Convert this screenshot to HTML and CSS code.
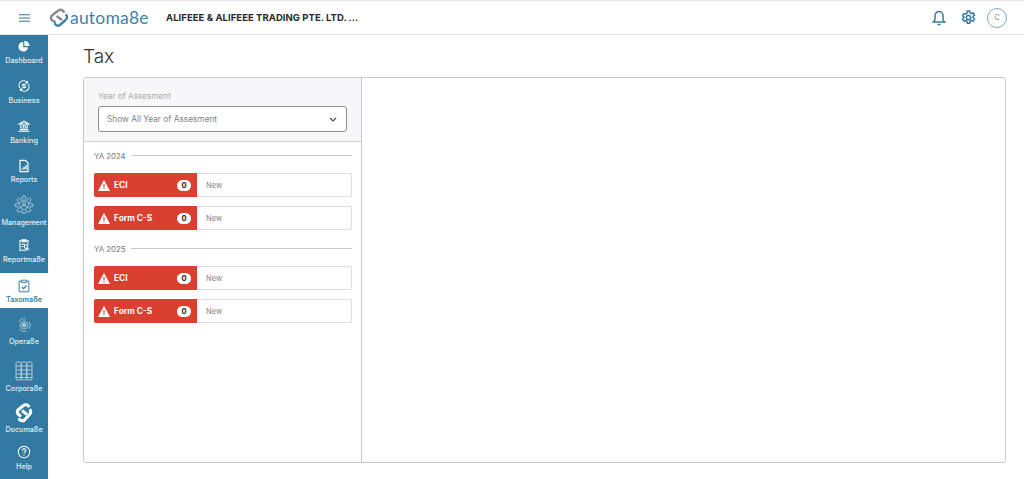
FILE: index.html
```html
<!DOCTYPE html>
<html lang="en">
<head>
<meta charset="utf-8">
<title>Tax</title>
<link rel="stylesheet" href="styles.css">
</head>
<body>
<header class="topbar">
  <svg class="menu" viewBox="0 0 11 8" width="11" height="8"><path d="M0 .7h11M0 4h11M0 7.300h11" stroke="#337aa2" stroke-width="1.100" fill="none"/></svg>
  <svg class="logo-mark" viewBox="0 0 20 20" width="20" height="20" fill="none" stroke-width="2.400">
    <path d="M9.500 2.500 3.500 7a3.200 3.200 0 0 0 0 5.500l3 2" stroke="#85898e"/>
    <path d="M9.500 2.500a3.400 3.400 0 0 1 4.500.300l1.500 1.700" stroke="#85898e"/>
    <path d="M7.500 8l5.500 4" stroke="#85898e"/>
    <path d="M16.500 6.500a3.200 3.200 0 0 1 0 5.500l-5.500 5a3.400 3.400 0 0 1-4.500-.5L5.500 15" stroke="#3d82ab"/>
  </svg>
  <span class="logo-text">automa8e</span>
  <span class="company">ALIFEEE &amp; ALIFEEE TRADING PTE. LTD. ...</span>
  <div class="top-actions">
    <svg class="bell" viewBox="0 0 14 16" width="14" height="16" fill="none" stroke="#337aa2" stroke-width="1.500"><path d="M7 1.500a4 4 0 0 1 4 4V9c0 1.500.8 2.400 1.600 3H1.400C2.200 11.400 3 10.500 3 9V5.500a4 4 0 0 1 4-4Z"/><path d="M5.500 14.500h3"/></svg>
    <svg class="gear" viewBox="0 0 16 16" width="15" height="15" fill="none" stroke="#337aa2" stroke-width="1.600"><path d="M6.700 1h2.600l.4 2 1.500.8 1.900-.7 1.300 2.300-1.500 1.300v1.600l1.500 1.300-1.300 2.300-1.900-.7-1.500.8-.4 2H6.700l-.4-2-1.500-.8-1.900.7-1.300-2.300 1.500-1.300V7.400L1.600 6.100l1.300-2.300 1.900.7 1.500-.8Z"/><circle cx="8" cy="8.200" r="2.300"/></svg>
    <span class="avatar">C</span>
  </div>
</header>
<div class="shell">
  <nav class="sidebar">
    <a class="nav h40"><svg class="ic" viewBox="-2 -2 20 20" width="16" height="16" fill="#fff"><path d="M7 3a6 6 0 1 0 6 6.500H7Z"/><path d="M8.500 1.500v6.500H15a6.500 6.500 0 0 0-6.500-6.500Z"/></svg><span>Dashboard</span></a>
    <a class="nav h40"><svg class="ic" viewBox="-2 -2 20 20" width="16" height="16" fill="none" stroke="#fff" stroke-width="1.400"><path d="M2.800 10.500A5.500 5.500 0 0 1 12 3.800M13.200 5.500A5.500 5.500 0 0 1 4 12.200"/><path d="M12.400 1.800v2.300h-2.300M3.600 14.200v-2.300h2.300"/><path d="M10 6H7a1 1 0 0 0 0 2h2a1 1 0 0 1 0 2H6"/></svg><span>Business</span></a>
    <a class="nav h40"><svg class="ic" viewBox="-2 -2 20 20" width="16" height="16" fill="none" stroke="#fff" stroke-width="1.400"><path d="M2 5.500 8 2l6 3.500ZM1 14.500h14M3 12.500h10M4 6.500v5M7 6.500v5M9.500 6.500v5M12 6.500v5"/></svg><span>Banking</span></a>
    <a class="nav h34"><svg class="ic" viewBox="-2 -2 20 20" width="16" height="16" fill="none" stroke="#fff" stroke-width="1.500"><path d="M3 1h7l3 3.500V15H3Z"/><path d="M6 12.500V11M8 12.500V9M10.500 12.500V7" stroke-width="1.700"/></svg><span>Reports</span></a>
    <a class="nav h45"><svg class="ic dim" viewBox="-3 -3 30 30" width="24" height="24" fill="none" stroke="#fff" stroke-width="1.200"><path d="M10.500 2h3l.5 3 2.200 1 2.600-1.700 2.100 2.100L19 9l1 2.500 3 .5v3l-3 .5-1 2.200 1.700 2.600-2.100 2.100-2.600-1.700-2 .8-.5 2h-3l-.5-2-2.200-.8-2.600 1.700-2.100-2.100L5 18l-1-2.500-3-.5v-3l3-.5L5 9 3.300 6.400l2.100-2.100L8 6l2-1Z"/><circle cx="12" cy="13" r="6"/><circle cx="12" cy="11" r="2"/><path d="M8.500 17a3.500 3.500 0 0 1 7 0"/></svg><span>Management</span></a>
    <a class="nav h36"><svg class="ic" viewBox="-2 -2 20 20" width="16" height="16" fill="none" stroke="#fff" stroke-width="1.300"><path d="M5 2.500H3v12h8v-2"/><path d="M11 2.500h2v5"/><path d="M5.500 1.500h5v2.500h-5Z" fill="#fff"/><path d="M5 7h4M5 10h2"/><circle cx="10.500" cy="10" r="2.200"/><path d="m12 12 2.500 2.500"/></svg><span>Reportma8e</span></a>
    <a class="nav active"><svg class="ic" viewBox="-1 -1 18 18" width="16" height="16" fill="none" stroke="#337aa2" stroke-width="1.100"><path d="M5 2.500H2.500v12h11v-12H11"/><path d="M5 1.500h6v2.500H5Z"/><path d="m5.500 9 2 2 3.500-3.500" stroke-width="1.400"/></svg><span>Taxoma8e</span></a>
    <a class="nav operate"><svg class="ic dim" viewBox="-3 -3 26 26" width="20" height="20" fill="none" stroke="#fff" stroke-width="1.200"><path d="M3 6A8.500 8.500 0 0 1 12 1.800M17 6a8.500 8.500 0 0 1-.5 9M13 18a8.500 8.500 0 0 1-9-2.500"/><circle cx="10" cy="10" r="5"/><circle cx="10" cy="10" r="2.500" fill="#fff"/></svg><span>Opera8e</span></a>
    <a class="nav h43"><svg class="ic dim" viewBox="0 0 22 22" width="22" height="22" fill="none" stroke="#fff" stroke-width="1"><rect x="3" y="2" width="5" height="18" rx="1"/><rect x="8.500" y="2" width="5" height="18" rx="1"/><rect x="14" y="2" width="5" height="18" rx="1"/><path d="M3 6h16M3 10h16M3 14h16M3 17.500h16"/></svg><span>Corpora8e</span></a>
    <a class="nav h41"><svg class="ic" viewBox="0 0 20 20" width="20" height="20" fill="none" stroke="#fff" stroke-width="3"><path d="M9.500 2.500 4.500 6.500a3.200 3.200 0 0 0 0 5l2.500 2"/><path d="M9.500 2.500a3.500 3.500 0 0 1 5 .5l1 1"/><path d="M15.500 6.500a3.200 3.200 0 0 1 0 5l-5 5.500a3.500 3.500 0 0 1-5-.5l-1-1"/><path d="m8 7.500 5 4"/></svg><span>Documa8e</span></a>
    <a class="nav"><svg class="ic" viewBox="-1.500 -1.500 19 19" width="16" height="16" fill="none" stroke="#fff" stroke-width="1.200"><circle cx="8" cy="8" r="6.800"/><path d="M6 6.300a2 2 0 1 1 3 1.700c-.7.400-1 .8-1 1.600" stroke-width="1.300"/><path d="M8 11v1.200" stroke-width="1.300"/></svg><span>Help</span></a>
  </nav>
  <main class="content">
    <h1 class="title">Tax</h1>
    <section class="card">
      <aside class="left">
        <div class="filter">
          <label class="filter-label">Year of Assesment</label>
          <div class="select">
            <span>Show All Year of Assesment</span>
            <svg viewBox="0 0 8 5" width="8" height="5" fill="none" stroke="#3f4a8a" stroke-width="1.200"><path d="m1 1 3 3 3-3"/></svg>
          </div>
        </div>
        <div class="list">
          <div class="year"><span>YA 2024</span><i></i></div>
          <div class="row"><div class="tag"><svg class="warn" viewBox="0 0 12 11" width="12" height="11"><path d="M6 0 12 11H0Z" fill="#fff"/><path d="M6 4v3.500M6 8.300v1" stroke="#d94030" stroke-width="1.200"/></svg><b>ECI</b><em>0</em></div><span class="state">New</span></div>
          <div class="row"><div class="tag"><svg class="warn" viewBox="0 0 12 11" width="12" height="11"><path d="M6 0 12 11H0Z" fill="#fff"/><path d="M6 4v3.500M6 8.300v1" stroke="#d94030" stroke-width="1.200"/></svg><b>Form C-S</b><em>0</em></div><span class="state">New</span></div>
          <div class="year second"><span>YA 2025</span><i></i></div>
          <div class="row"><div class="tag"><svg class="warn" viewBox="0 0 12 11" width="12" height="11"><path d="M6 0 12 11H0Z" fill="#fff"/><path d="M6 4v3.500M6 8.300v1" stroke="#d94030" stroke-width="1.200"/></svg><b>ECI</b><em>0</em></div><span class="state">New</span></div>
          <div class="row"><div class="tag"><svg class="warn" viewBox="0 0 12 11" width="12" height="11"><path d="M6 0 12 11H0Z" fill="#fff"/><path d="M6 4v3.500M6 8.300v1" stroke="#d94030" stroke-width="1.200"/></svg><b>Form C-S</b><em>0</em></div><span class="state">New</span></div>
        </div>
      </aside>
      <div class="detail"></div>
    </section>
  </main>
</div>
</body>
</html>
```
FILE: styles.css
```css
* { box-sizing: border-box; }
html, body { margin: 0; height: 100%; }
body { font-family: "Inter", "Liberation Sans", sans-serif; background: #fff; overflow: hidden; color: #555; }
.topbar { height: 35px; display: flex; align-items: center; border-top: 1px solid #e6e6e8; border-bottom: 1px solid #e3e3e6; padding-left: 19px; background: #fff; }
.menu { margin-right: 19px; }
.logo-mark { margin-right: 1px; flex: none; }
.logo-text { font-family: "Lato", sans-serif; font-weight: 400; font-size: 17.500px; letter-spacing: 0.200px; color: #3d82ab; width: 96px; flex: none; }
.company { font-weight: 700; font-size: 9.500px; letter-spacing: 0.050px; color: #2a2a2a; }
.top-actions { margin-left: auto; display: flex; align-items: center; padding-right: 17px; }
.bell { margin-right: 15px; }
.gear { margin-right: 11px; }
.avatar { width: 20px; height: 20px; border: 1px solid #7aa8c6; border-radius: 50%; display: flex; align-items: center; justify-content: center; font-size: 7px; color: #777; }
.shell { display: flex; height: 444px; }
.sidebar { width: 48px; flex: none; background: #337aa2; padding-top: 3px; display: flex; flex-direction: column; overflow: hidden; }
.nav { display: flex; flex-direction: column; align-items: center; flex: none; height: 40px; color: #e4eef4; font-size: 7.200px; line-height: 11px; font-weight: 500; white-space: nowrap; }
.nav span { display: block; margin-top: 0.500px; }
.nav.h34 span { margin-top: -0.500px; }
.nav.active span { margin-top: -0.500px; }
.ic { display: block; flex: none; }
.ic.dim { opacity: .6; }
.h34 { height: 34px; }
.h36 { height: 36px; }
.h41 { height: 41px; }
.h43 { height: 43px; }
.h45 { height: 45px; }
.nav.active { height: 35px; padding-top: 5px; background: #fff; color: #337aa2; font-weight: 600; }
.nav.operate { height: 52px; padding-top: 7px; }
.content { flex: 1; padding: 9px 18px 0 35px; min-width: 0; }
.title { margin: 0 0 8px; font-size: 19px; line-height: 25px; font-weight: 300; color: #333; }
.card { display: flex; height: 386px; border: 1px solid #c9c9cc; border-radius: 3px; background: #fff; }
.left { width: 278px; flex: none; border-right: 1px solid #c9c9cc; }
.filter { height: 64px; padding: 13px 14px 0; background: #f7f7f9; border-bottom: 1px solid #cfcfd3; }
.filter-label { display: block; font-size: 8.200px; line-height: 11px; color: #a8a8ac; margin-bottom: 4px; }
.select { height: 26px; border: 1px solid #8f8f94; border-radius: 3px; background: #fff; display: flex; align-items: center; justify-content: space-between; padding: 0 9px 0 8px; font-size: 8.300px; color: #828287; }
.list { padding: 8px 9px 0 10px; }
.year { display: flex; align-items: center; gap: 6px; height: 11px; font-size: 7.800px; color: #77777c; margin-bottom: 12px; }
.year.second { margin-top: 13px; margin-bottom: 12px; }
.year i { flex: 1; height: 1px; background: #c9c9cc; }
.row { display: flex; align-items: center; height: 24px; border: 1px solid #dededf; border-radius: 2px; margin-bottom: 9px; background: #fff; }
.tag { width: 103px; height: 24px; margin: -1px 0 -1px -1px; background: #d94030; display: flex; align-items: center; padding: 0 6px 0 4px; color: #fff; font-size: 8.300px; border-radius: 2px 0 0 2px; flex: none; }
.warn { margin-right: 4px; flex: none; }
.tag b { font-weight: 700; flex: 1; }
.tag em { font-style: normal; font-weight: 700; width: 14px; height: 11px; border-radius: 6px; background: #fff; color: #222; display: flex; align-items: center; justify-content: center; font-size: 7.500px; }
.state { margin-left: 9px; font-size: 7.500px; color: #828287; }
.detail { flex: 1; }
```
